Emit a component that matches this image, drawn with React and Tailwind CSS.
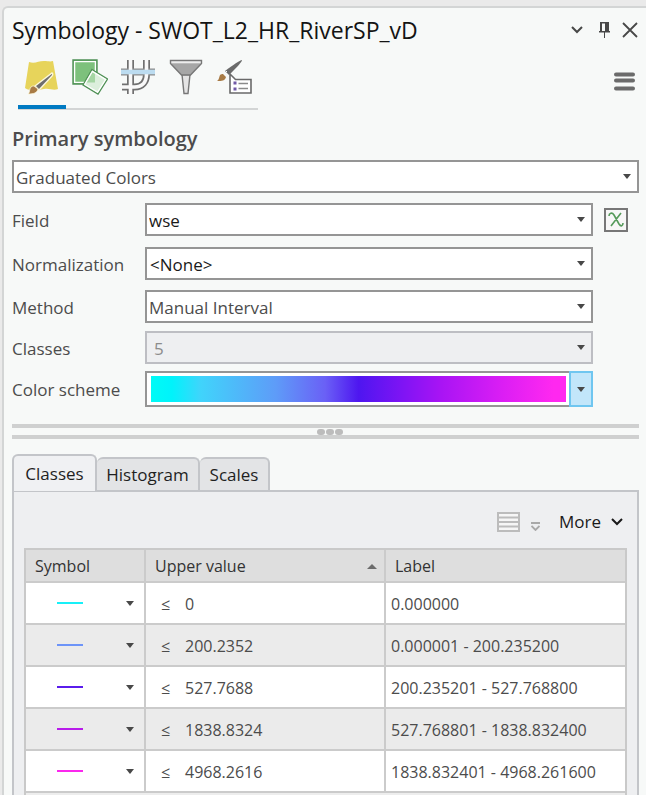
import React, { useState } from "react";

const CARET = "pointer-events-none absolute top-1/2 -mt-[3px]";

function Caret({ className = "" }) {
  return (
    <svg className={className} width="8" height="5" viewBox="0 0 8 5" aria-hidden="true">
      <path d="M0 0h8L4 5z" fill="#484848" />
    </svg>
  );
}

function Combo({ id, label, value, options, tone = "text-[#4c4c4c]", pad = "pl-[2px]", disabled }) {
  return (
    <div className="relative">
      <select
        id={id}
        aria-label={label}
        defaultValue={value}
        disabled={disabled}
        className={[
          "block h-[33px] w-full appearance-none rounded-none border-2 pt-[2px] pr-6 opacity-100 outline-none",
          pad,
          tone,
          disabled ? "border-[#bdbec3] bg-[#eeeff1]" : "border-[#959595] bg-white",
        ].join(" ")}
      >
        {options.map((o) => (
          <option key={o}>{o}</option>
        ))}
      </select>
      <Caret className={CARET + " right-2"} />
    </div>
  );
}

function Row({ id, label, children, extra, gap }) {
  return (
    <div className={"flex items-center " + gap}>
      <label htmlFor={id} className="w-[133px] shrink-0 pt-[2px] text-[#4c4c4c]">
        {label}
      </label>
      <div className="min-w-0 flex-1">{children}</div>
      <div className="flex w-[46px] shrink-0 justify-center">{extra}</div>
    </div>
  );
}

function SymbolBrush() {
  return (
    <svg width="36" height="36" viewBox="0 0 36 36" aria-hidden="true">
      <path d="M5 3c6 2 9-1 15-1 4 0 6 1 9 0l5 28c-5 2-8-1-14 0-7 1-13 3-19-1z" fill="#e7d45b" />
      <path d="M28 14c1 0 1 2 0 3L15 31l-4-4z" fill="#6e6e6e" stroke="#fbf7dc" strokeWidth="1.4" />
      <path d="M10 27l4 3c-1 4-4 5-10 5 2-1 1-5 3-7 1-1 2-1 3-1z" fill="#a87b46" stroke="#fbf7dc" strokeWidth=".8" />
    </svg>
  );
}

function Transparency() {
  return (
    <svg width="36" height="36" viewBox="0 0 36 36" aria-hidden="true">
      <path d="M1 1h24v24H1z" fill="#7dc17c" stroke="#4f9055" strokeWidth="1.4" />
      <path d="M2.600 2.600h20.800v20.800H2.600z" fill="none" stroke="#fff" strokeWidth="1.3" />
      <path d="M20 10.500l15.500 9.500-9.500 15-15-9z" fill="#dcefdc" stroke="#4f9055" strokeWidth="1.3" />
      <path d="M20 12.500l3 2v9h-9z" fill="#a5d6a3" />
      <path d="M20.400 12.400l13.200 8.100-8 12.600-12.800-7.700z" fill="none" stroke="#fff" strokeWidth="1.2" />
    </svg>
  );
}

function Masking() {
  return (
    <svg width="36" height="36" viewBox="0 0 36 36" fill="none" aria-hidden="true">
      <path d="M10.500 1v34M26.500 1v14c0 8-4 13-12 13H2" stroke="#707070" strokeWidth="7" />
      <path d="M1 13h34" stroke="#8c8c8c" strokeWidth="7" />
      <path d="M10.500 1v34M26.500 1v14c0 8-4 13-12 13H1" stroke="#f9f9f9" strokeWidth="3.6" />
      <path d="M1 13h34" stroke="#bcdcf0" strokeWidth="4.6" />
    </svg>
  );
}

function Funnel() {
  return (
    <svg width="36" height="36" viewBox="0 0 36 36" aria-hidden="true">
      <path d="M14 15.500h8l-2 19h-4z" fill="#e4e4e4" stroke="#777" strokeWidth="1.4" />
      <path d="M2.500 1.500h31v3L22.500 16h-9L2.500 4.500z" fill="#a6a6a6" stroke="#777" strokeWidth="1.4" />
      <path d="M3.300 2.300h29.400v2H3.300z" fill="#ededed" />
    </svg>
  );
}

function BrushForm() {
  return (
    <svg width="36" height="36" viewBox="0 0 36 36" aria-hidden="true">
      <path d="M26 1c0 2-6 8-13 15l-4-4C17 6 24 1 26 1z" fill="#6a6a6a" />
      <path d="M11 12l-2 2 3 3" stroke="#f7f9f8" strokeWidth="1" fill="none" />
      <path d="M7 15l3 3c-1 4-4 4-9 4 2-1 2-4 3-6 1-1 2-1 3-1z" fill="#a87b46" />
      <path d="M14 15l5.500 5.500H35V34H14z" fill="#fff" stroke="#696969" strokeWidth="1.6" />
      <path d="M17.500 22.500h3v3h-3zM17.500 28.500h3v3h-3z" fill="#7059a6" />
      <path d="M22.500 24.500H32M22.500 29.500H32" stroke="#8a8a8a" strokeWidth="1.500" />
    </svg>
  );
}

const MODES = [
  ["Primary symbology", SymbolBrush],
  ["Vary symbology by attribute", Transparency],
  ["Symbol layer drawing", Masking],
  ["Display filters", Funnel],
  ["Advanced options", BrushForm],
];

const CLASSES = [
  { line: "bg-[#18f0f8]", upper: "0", label: "0.000000" },
  { line: "bg-[#6d94f8]", upper: "200.2352", label: "0.000001 - 200.235200" },
  { line: "bg-[#5a1cec]", upper: "527.7688", label: "200.235201 - 527.768800" },
  { line: "bg-[#b81cea]", upper: "1838.8324", label: "527.768801 - 1838.832400" },
  { line: "bg-[#fb28ee]", upper: "4968.2616", label: "1838.832401 - 4968.261600" },
];

const TABS = [
  ["Classes", "w-[85px]"],
  ["Histogram", "w-[103px]"],
  ["Scales", "w-[70px]"],
];

export default function App() {
  const [mode, setMode] = useState(0);
  const [tab, setTab] = useState("Classes");

  return (
    <div className="flex min-h-screen flex-col bg-[#eaeaea] pt-[6px] pl-[2px] font-['Open_Sans','Noto_Sans',sans-serif] text-[17px] leading-6">
      <main className="flex flex-1 flex-col rounded-tl-md border-t-2 border-l-2 border-[#d3d5d5] bg-[#f7f9f8] pr-[7px] pl-2">
        <header className="flex h-11 items-center justify-between">
          <h1 className="text-[23px] leading-8 text-[#141414]">Symbology - SWOT_L2_HR_RiverSP_vD</h1>
          <div className="mr-px flex items-center gap-4 text-[#484848]">
            <button aria-label="Pane options">
              <svg width="12" height="8" viewBox="0 0 12 8" fill="none" stroke="currentColor" strokeWidth="2">
                <path d="M1 1l5 5 5-5" />
              </svg>
            </button>
            <button aria-label="Auto hide">
              <svg width="11" height="16" viewBox="0 0 11 16" fill="currentColor">
                <path d="M1 0h9v9h1v1.500H6V16H5v-5.500H0V9h1zM3 1.500V9h3V1.500z" fillRule="evenodd" />
              </svg>
            </button>
            <button aria-label="Close" className="-ml-1">
              <svg width="16" height="16" viewBox="0 0 16 16" fill="none" stroke="currentColor" strokeWidth="1.800">
                <path d="M1 1l14 14M15 1L1 15" />
              </svg>
            </button>
          </div>
        </header>

        <div className="flex items-center justify-between">
          <nav className="ml-[6px] flex h-[58px] border-b-2 border-[#d3d5d5]">
            {MODES.map(([name, Icon], i) => (
              <button
                key={name}
                aria-label={name}
                aria-pressed={mode === i}
                onClick={() => setMode(i)}
                className={
                  "-mb-px flex w-12 items-start justify-center border-b-4 pt-[7px] " +
                  (mode === i ? "border-[#007ac2]" : "border-transparent")
                }
              >
                <Icon />
              </button>
            ))}
          </nav>
          <button aria-label="Menu" className="mr-1">
            <svg width="21" height="19" viewBox="0 0 21 19" stroke="#6b6b6b" strokeWidth="4" strokeLinecap="round">
              <path d="M2 2.500h17M2 8.500h17M2 16.500h17" />
            </svg>
          </button>
        </div>

        <h2 className="mt-[15px] text-[20px] leading-7 font-semibold text-[#4c4c4c]">Primary symbology</h2>
        <div className="mt-[7px]">
          <Combo label="Primary symbology" value="Graduated Colors" options={["Graduated Colors", "Single Symbol", "Unique Values"]} />
        </div>

        <Row
          id="field"
          label="Field"
          gap="mt-[10px]"
          extra={
            <button aria-label="Set an expression" className="flex size-6 items-center justify-center border-2 border-[#777] bg-[#f7f7f7]">
              <svg width="16" height="15" viewBox="0 0 16 15" fill="none" stroke="#559a5a" strokeWidth="1.600">
                <path d="M1 4c0-3 3-4 5-1l5 9c2 3 4 2 4-1M13 1L3 14" />
              </svg>
            </button>
          }
        >
          <Combo id="field" value="wse" options={["wse", "width", "slope"]} tone="text-[#1a1a1a]" />
        </Row>
        <Row id="normalization" label="Normalization" gap="mt-[11px]">
          <Combo id="normalization" value="<None>" options={["<None>", "<percentage of total>", "<log>"]} tone="text-[#1a1a1a]" pad="pl-[3px]" />
        </Row>
        <Row id="method" label="Method" gap="mt-[10px]">
          <Combo id="method" value="Manual Interval" options={["Manual Interval", "Natural Breaks (Jenks)", "Quantile"]} />
        </Row>
        <Row id="classes" label="Classes" gap="mt-2">
          <Combo id="classes" value="5" options={["5"]} tone="text-[#8c8c8c]" pad="pl-[7px]" disabled />
        </Row>
        <Row id="scheme" label="Color scheme" gap="mt-[7px]">
          <div className="flex h-9">
            <div className="flex-1 border-2 border-r-0 border-[#959595] bg-white py-[3px] pr-[3px] pl-1">
              <div className="h-full bg-[linear-gradient(90deg,#00fbf6_0%,#00f3fb_5%,#40d4fb_12%,#5e9cf8_30%,#6a60f6_42%,#4e16f0_50%,#7c14f4_60%,#a914f4_70%,#dc1ef4_85%,#ff28f0_97%)]" />
            </div>
            <button id="scheme" className="flex w-6 items-center justify-center border-2 border-[#6fc6f0] bg-[#c2e6fa]">
              <Caret />
            </button>
          </div>
        </Row>

        <div className="mt-[17px] flex h-[15px] items-center justify-center gap-px border-y-4 border-[#cfd0d0] pl-2">
          <span className="h-[6px] w-2 rounded-full bg-[#bcbcbc]" />
          <span className="h-[6px] w-2 rounded-full bg-[#bcbcbc]" />
          <span className="h-[6px] w-2 rounded-full bg-[#bcbcbc]" />
        </div>

        <div role="tablist" className="mt-[15px] flex items-end">
          {TABS.map(([name, width]) => (
            <button
              key={name}
              role="tab"
              aria-selected={tab === name}
              onClick={() => setTab(name)}
              className={
                "rounded-t-md border-2 border-b-0 border-[#c3c5c9] text-[#1f1f1f] " +
                width +
                (tab === name ? " relative -mb-px h-[37px] bg-[#f0f1f3]" : " h-[33px] border-l-0 bg-[#e3e4e6]")
              }
            >
              {name}
            </button>
          ))}
        </div>

        <section className="flex flex-1 flex-col border-2 border-b-0 border-[#c3c5c9] bg-[#eeeff1] px-[10px]">
          <div className="flex h-14 items-center justify-end pt-[3px] pr-1">
            <button aria-label="Show rows">
              <svg width="23" height="20" viewBox="0 0 23 20" fill="#f6f6f6" stroke="#bcbcbc" strokeWidth="2">
                <path d="M1 1h21v18H1zM1 5.500h21M1 10h21M1 14.500h21" />
              </svg>
            </button>
            <button aria-label="More tools" className="mt-[10px] ml-[11px]">
              <svg width="9" height="9" viewBox="0 0 9 9" fill="none" stroke="#a9a9a9" strokeWidth="1.800">
                <path d="M0 1h9M.5 4l4 4 4-4" />
              </svg>
            </button>
            <button className="ml-[19px] flex items-center gap-[10px] text-[#1a1a1a]">
              More
              <svg width="12" height="8" viewBox="0 0 12 8" fill="none" stroke="currentColor" strokeWidth="2">
                <path d="M1 1l5 5 5-5" />
              </svg>
            </button>
          </div>

          <div className="flex flex-1 flex-col border-2 border-b-0 border-[#c9c9c9] bg-[#ededed]">
            <table className="w-full table-fixed border-separate border-spacing-0 text-left text-[16px]">
              <colgroup>
                <col className="w-[120px]" />
                <col className="w-[240px]" />
                <col />
              </colgroup>
              <thead className="bg-[#dedede] text-[#333]">
                <tr className="h-[33px]">
                  <th className="border-r-2 border-b-2 border-[#cbcbcb] p-0 pt-px pl-[9px] font-normal">Symbol</th>
                  <th className="border-r-2 border-b-2 border-[#cbcbcb] p-0 pt-px pr-[7px] pl-[9px] font-normal">
                    <div className="flex items-center justify-between">
                      Upper value
                      <svg width="10" height="5" viewBox="0 0 10 5" aria-hidden="true">
                        <path d="M0 5h10L5 0z" fill="#6c6c6c" />
                      </svg>
                    </div>
                  </th>
                  <th className="border-b-2 border-[#cbcbcb] p-0 pt-px pl-[9px] font-normal">Label</th>
                </tr>
              </thead>
              <tbody className="text-[#4c4c4c]">
                {CLASSES.map((c) => (
                  <tr key={c.label} className="h-[42px] odd:bg-white even:bg-[#ebebeb]">
                    <td className="border-r-2 border-b-2 border-[#cbcbcb] p-0">
                      <button aria-label={"Symbol for " + c.label} className="flex w-full items-center justify-between pr-[10px] pl-[31px]">
                        <span className={"h-[2px] w-[26px] " + c.line} />
                        <Caret />
                      </button>
                    </td>
                    <td className="border-r-2 border-b-2 border-[#cbcbcb] p-0 pt-[2px] pl-[15px]">
                      <div className="flex">
                        <span className="w-6">≤</span>
                        {c.upper}
                      </div>
                    </td>
                    <td className="border-b-2 border-[#cbcbcb] p-0 pt-[2px] pl-[5px]">{c.label}</td>
                  </tr>
                ))}
              </tbody>
            </table>
          </div>
        </section>
      </main>
    </div>
  );
}
